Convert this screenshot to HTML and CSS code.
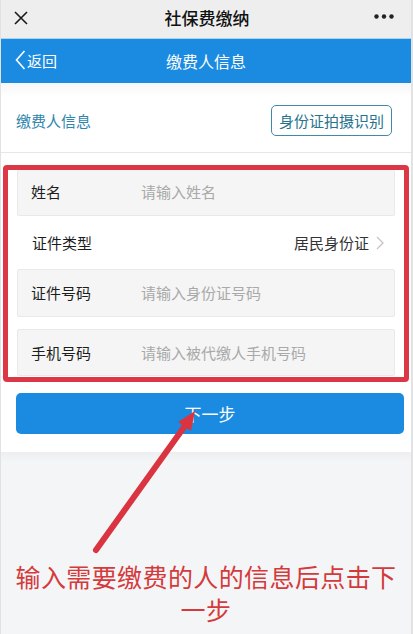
FILE: index.html
```html
<!DOCTYPE html>
<html>
<head>
  <meta charset="UTF-8">
  <title>社保费缴纳</title>
  <link rel="stylesheet" href="styles.css">
</head>
<body>
  <div class="page">
    <div class="topbar">
      <svg class="close-icon" width="14" height="14" viewBox="0 0 14 14">
        <path d="M1 1 L13 13 M13 1 L1 13" stroke="#1a1a1a" stroke-width="1.6" fill="none"/>
      </svg>
      <div class="topbar-title">社保费缴纳</div>
      <svg class="more" width="20" height="5" viewBox="0 0 20 5">
        <circle cx="2.5" cy="2.5" r="2.2" fill="#222"/>
        <circle cx="10" cy="2.5" r="2.2" fill="#222"/>
        <circle cx="17.5" cy="2.5" r="2.2" fill="#222"/>
      </svg>
    </div>

    <div class="navbar">
      <div class="back">
        <svg width="11" height="20" viewBox="0 0 11 20">
          <path d="M9.5 1 L1.5 10 L9.5 19" stroke="#fff" stroke-width="1.6" fill="none"/>
        </svg>
        <span>返回</span>
      </div>
      <div class="nav-title">缴费人信息</div>
    </div>

    <div class="content">
      <div class="info-head">
        <div class="info-label">缴费人信息</div>
        <button class="scan-btn">身份证拍摄识别</button>
      </div>

      <div class="form-box">
        <div class="row row-input row-name">
          <span class="row-label">姓名</span>
          <span class="placeholder">请输入姓名</span>
        </div>
        <div class="row row-select">
          <span class="row-label">证件类型</span>
          <span class="select-value">居民身份证
            <svg width="8" height="14" viewBox="0 0 8 14">
              <path d="M1 1 L7 7 L1 13" stroke="#c4c4c4" stroke-width="1.3" fill="none"/>
            </svg>
          </span>
        </div>
        <div class="row row-input row-id">
          <span class="row-label">证件号码</span>
          <span class="placeholder">请输入身份证号码</span>
        </div>
        <div class="row row-input row-phone">
          <span class="row-label">手机号码</span>
          <span class="placeholder">请输入被代缴人手机号码</span>
        </div>
      </div>

      <button class="next-btn">下一步</button>
    </div>

    <div class="bottom">
      <div class="tip">输入需要缴费的人的信息后点击下一步</div>
    </div>

    <!-- 标注箭头 -->
    <svg class="arrow" width="413" height="634" viewBox="0 0 413 634">
      <line x1="95" y1="550" x2="186" y2="423" stroke="#da3440" stroke-width="6" stroke-linecap="round"/>
      <polygon points="194,411 177,422 190,431" fill="#da3440"/>
    </svg>
  </div>
</body>
</html>
```

FILE: styles.css
```css
* {
  margin: 0;
  padding: 0;
  box-sizing: border-box;
}

body {
  font-family: "Noto Sans CJK SC", "Noto Sans", sans-serif;
  background: #ffffff;
  color: #1d1d1d;
}

.page {
  position: relative;
  width: 413px;
  height: 634px;
  overflow: hidden;
  border-left: 1px solid #e2e2e2;
  border-right: 2px solid #e2e2e2;
}

/* 顶部栏 */
.topbar {
  height: 39px;
  background: #eeeeee;
  border-bottom: 1px solid #a9d4f0;
  display: flex;
  align-items: center;
  justify-content: space-between;
  padding: 0 17px 0 13px;
  position: relative;
}

.close-icon {
  flex: none;
  margin-top: -2px;
}

.topbar-title {
  position: absolute;
  left: 0;
  right: 0;
  text-align: center;
  font-size: 17px;
  font-weight: 500;
  color: #111;
  margin-top: -4px;
  padding-left: 2px;
}

.more {
  margin-top: -5px;
}

/* 导航栏 */
.navbar {
  height: 44px;
  background: #1a8be0;
  display: flex;
  align-items: center;
  position: relative;
  color: #fff;
}

.back {
  display: flex;
  align-items: center;
  padding-left: 14px;
  font-size: 15px;
  gap: 1px;
  margin-top: -2px;
}

.nav-title {
  position: absolute;
  left: 0;
  right: 0;
  text-align: center;
  font-size: 16px;
  margin-top: -1px;
}

/* 内容区 */
.content {
  background: #fff;
  height: 369px;
}

.info-head {
  height: 70px;
  display: flex;
  align-items: center;
  justify-content: space-between;
  padding: 7px 19px 0 15px;
  border-bottom: 1px solid #e6e6e6;
  background: linear-gradient(#f6f6f6, #fff 14px);
}

.info-label {
  font-size: 15px;
  color: #2f86ad;
  margin-top: -2px;
}

.scan-btn {
  font-family: inherit;
  font-size: 15px;
  color: #26738f;
  background: #fff;
  border: 1px solid #3f8aa6;
  border-radius: 5px;
  padding: 0 7px;
  height: 31px;
  margin-top: -1px;
}

.form-box {
  margin: 12px 2px 0 2px;
  border: 5px solid #dc3744;
  border-radius: 4px;
  padding: 0 9px;
  height: 217px;
}

.row {
  display: flex;
  align-items: center;
  font-size: 15px;
}

.row-input {
  background: #f5f5f5;
  border: 1px solid #e9e9e9;
  border-top: none;
  border-radius: 2px;
}

.row-label {
  width: 123px;
  padding-left: 13px;
  color: #1d1d1d;
}

.placeholder {
  color: #a9a9a9;
}

.row-name {
  height: 46px;
  padding-bottom: 3px;
}

.row-select {
  height: 53px;
  justify-content: space-between;
}

.row-select .row-label {
  padding-left: 15px;
}

.select-value {
  display: flex;
  align-items: center;
  gap: 7px;
  padding-right: 11px;
  color: #333;
}

.row-id {
  height: 48px;
  border-top: 1px solid #e9e9e9;
  margin-bottom: 12px;
  padding-bottom: 2px;
}

.row-phone {
  height: 47px;
  border-top: 1px solid #e9e9e9;
}

.next-btn {
  display: block;
  margin: 11px 10px 0 15px;
  width: 388px;
  height: 41px;
  background: #1a8be0;
  border: none;
  border-radius: 5px;
  color: #fff;
  font-family: inherit;
  font-size: 17px;
}

/* 底部说明 */
.bottom {
  height: 182px;
  background: linear-gradient(#eceef0, #f4f5f7 10px);
  padding: 108px 8px 0 8px;
}

.tip {
  font-size: 25px;
  letter-spacing: 0.4px;
  line-height: 33px;
  color: #d43a3c;
  text-align: center;
}

.arrow {
  position: absolute;
  left: 0;
  top: 0;
  pointer-events: none;
}
```
